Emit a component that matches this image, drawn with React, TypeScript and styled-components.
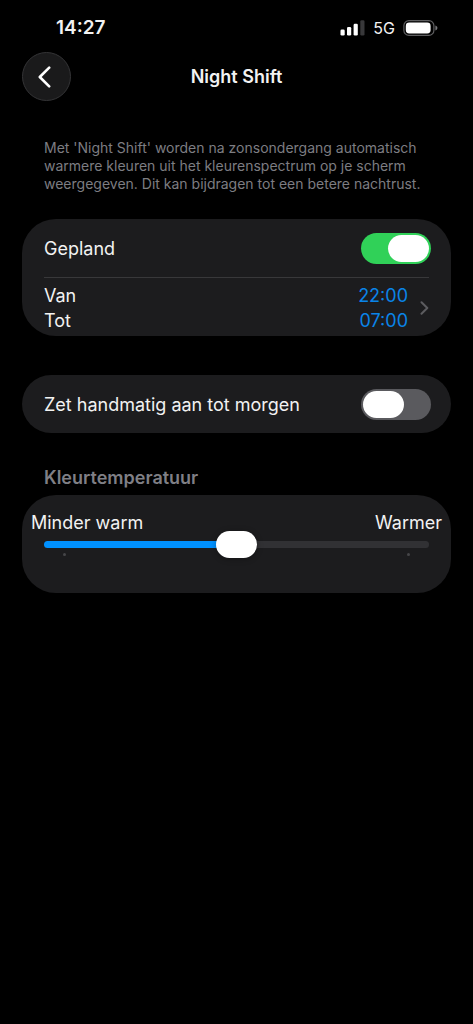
import React, { useState } from "react";
import styled, { createGlobalStyle } from "styled-components";

const GlobalStyle = createGlobalStyle`
  *, *::before, *::after {
    box-sizing: border-box;
  }
  body {
    margin: 0;
    background: #000;
    color: #f2f2f2;
    font-family: Inter, "Liberation Sans", sans-serif;
    font-size: 18px;
    line-height: 24px;
  }
`;

const Screen = styled.div`
  min-height: 100vh;
  background: #000;
`;

const StatusBar = styled.div`
  display: flex;
  justify-content: space-between;
  align-items: center;
  height: 52px;
  padding: 4px 35px 0 56px;
`;

const Clock = styled.time`
  font-size: 19px;
  font-weight: 600;
`;

const StatusIcons = styled.div`
  display: flex;
  align-items: center;
  gap: 8px;
`;

const Network = styled.span`
  font-size: 16px;
  font-weight: 400;
`;

const NavBar = styled.header`
  display: grid;
  grid-template-columns: 49px 1fr 49px;
  align-items: center;
  padding: 0 22px;
`;

const BackButton = styled.button`
  display: flex;
  align-items: center;
  justify-content: center;
  width: 49px;
  height: 49px;
  padding: 0 4px 0 0;
  border: 1px solid #343436;
  border-radius: 50%;
  background: #1a1a1b;
  color: #fff;
`;

const Title = styled.h1`
  margin: 0;
  font-size: 18px;
  font-weight: 600;
  text-align: center;
`;

const Content = styled.main`
  padding: 38px 22px;
`;

const Intro = styled.p`
  margin: 0 22px 26px;
  color: #7d7d82;
  font-size: 14px;
  line-height: 18px;
`;

const Card = styled.section`
  border-radius: 34px;
  background: #1c1c1e;
`;

const ToggleRow = styled.label`
  display: flex;
  align-items: center;
  justify-content: space-between;
  height: 58px;
  padding: 0 20px 0 22px;
`;

const RowLabel = styled.span`
  padding-top: 2px;
`;

const Switch = styled.input`
  appearance: none;
  flex: none;
  width: 70px;
  height: 31px;
  margin: 0;
  padding: 2px;
  border-radius: 16px;
  background: #5a5a5e;

  &::before {
    content: "";
    display: block;
    width: 41px;
    height: 27px;
    border-radius: 14px;
    background: #fff;
  }

  &:checked {
    background: #30d158;
  }

  &:checked::before {
    margin-left: auto;
  }
`;

const Divider = styled.hr`
  height: 1px;
  margin: 0 22px;
  border: 0;
  background: #38383a;
`;

const ScheduleButton = styled.button`
  display: flex;
  align-items: center;
  width: 100%;
  padding: 5px 22px 3px;
  border: 0;
  background: none;
  color: inherit;
  font: inherit;
  text-align: left;
`;

const ScheduleLines = styled.span`
  flex: 1;
  margin-right: 12px;
`;

const ScheduleLine = styled.span`
  display: flex;
  justify-content: space-between;
  line-height: 25px;
`;

const Time = styled.span`
  color: #0a84e8;
`;

const ManualCard = styled(Card)`
  margin-top: 39px;
`;

const SectionTitle = styled.h2`
  margin: 33px 22px 5px;
  color: #7f7f85;
  font-size: 18px;
  font-weight: 600;
  line-height: 24px;
`;

const SliderCard = styled(Card)`
  padding: 16px 0 37px;
`;

const SliderLabels = styled.div`
  display: flex;
  justify-content: space-between;
  padding: 0 9px;
`;

const SliderArea = styled.div`
  margin: -4px 22px 0;
`;

const Slider = styled.input<{ $fill: number }>`
  appearance: none;
  display: block;
  width: 100%;
  height: 27px;
  margin: 0;
  background: none;

  &::-webkit-slider-runnable-track {
    height: 7px;
    border-radius: 4px;
    background: linear-gradient(
      to right,
      #0091ff ${(p) => p.$fill}%,
      #313134 ${(p) => p.$fill}%
    );
  }

  &::-webkit-slider-thumb {
    appearance: none;
    width: 41px;
    height: 27px;
    margin-top: -10px;
    border-radius: 14px;
    background: #fff;
    box-shadow: 0 1px 6px rgba(0, 0, 0, 0.3);
  }
`;

const Ticks = styled.div`
  display: flex;
  justify-content: space-between;
  margin-top: -5px;
  padding: 0 19px;
`;

const Tick = styled.span`
  width: 3px;
  height: 3px;
  border-radius: 50%;
  background: #464649;
`;

function SignalIcon() {
  return (
    <svg width="25" height="16" viewBox="0 0 25 16" aria-hidden="true">
      <rect x="0.5" y="9.5" width="4.2" height="6" rx="1.3" fill="#fff" />
      <rect x="7" y="7" width="4.2" height="8.5" rx="1.3" fill="#fff" />
      <rect x="13.6" y="3.8" width="4.2" height="11.7" rx="1.3" fill="#fff" />
      <rect x="20.3" y="0.3" width="4.2" height="15.2" rx="1.3" fill="#38383a" />
    </svg>
  );
}

function BatteryIcon() {
  return (
    <svg width="35" height="16" viewBox="0 0 35 16" aria-hidden="true">
      <rect x="0.9" y="0.6" width="30" height="14.8" rx="5" fill="none" stroke="#5e5e60" strokeWidth="1.2" />
      <rect x="2.8" y="2.5" width="24.8" height="11" rx="3.4" fill="#fff" />
      <path d="M32.4 5.6c1.3.4 2 1.300 2 2.400s-.7 2-2 2.400z" fill="#77777a" />
    </svg>
  );
}

export default function App() {
  const [scheduled, setScheduled] = useState(true);
  const [manual, setManual] = useState(false);
  const [warmth, setWarmth] = useState(50);

  return (
    <Screen lang="nl">
      <GlobalStyle />
      <StatusBar>
        <Clock>14:27</Clock>
        <StatusIcons>
          <SignalIcon />
          <Network>5G</Network>
          <BatteryIcon />
        </StatusIcons>
      </StatusBar>
      <NavBar>
        <BackButton type="button" aria-label="Terug">
          <svg width="13" height="22" viewBox="0 0 13 22" fill="none" aria-hidden="true">
            <path d="M11.200 1.700L1.800 11l9.400 9.300" stroke="currentColor" strokeWidth="2.600" strokeLinecap="round" strokeLinejoin="round" />
          </svg>
        </BackButton>
        <Title>Night Shift</Title>
      </NavBar>
      <Content>
        <Intro>
          Met 'Night Shift' worden na zonsondergang automatisch warmere kleuren uit het
          kleurenspectrum op je scherm weergegeven. Dit kan bijdragen tot een betere nachtrust.
        </Intro>
        <Card>
          <ToggleRow>
            <RowLabel>Gepland</RowLabel>
            <Switch
              type="checkbox"
              role="switch"
              checked={scheduled}
              onChange={(e) => setScheduled(e.target.checked)}
            />
          </ToggleRow>
          <Divider />
          <ScheduleButton type="button">
            <ScheduleLines>
              <ScheduleLine>
                Van <Time>22:00</Time>
              </ScheduleLine>
              <ScheduleLine>
                Tot <Time>07:00</Time>
              </ScheduleLine>
            </ScheduleLines>
            <svg width="9" height="14" viewBox="0 0 9 14" fill="none" aria-hidden="true">
              <path d="M1.500 1.200L7.300 7l-5.800 5.800" stroke="#5c5c60" strokeWidth="2" strokeLinecap="round" strokeLinejoin="round" />
            </svg>
          </ScheduleButton>
        </Card>
        <ManualCard>
          <ToggleRow>
            <RowLabel>Zet handmatig aan tot morgen</RowLabel>
            <Switch
              type="checkbox"
              role="switch"
              checked={manual}
              onChange={(e) => setManual(e.target.checked)}
            />
          </ToggleRow>
        </ManualCard>
        <SectionTitle id="warmth-title">Kleurtemperatuur</SectionTitle>
        <SliderCard>
          <SliderLabels>
            <span>Minder warm</span>
            <span>Warmer</span>
          </SliderLabels>
          <SliderArea>
            <Slider
              type="range"
              min={0}
              max={100}
              value={warmth}
              $fill={warmth}
              aria-labelledby="warmth-title"
              onChange={(e) => setWarmth(Number(e.target.value))}
            />
            <Ticks>
              <Tick />
              <Tick />
            </Ticks>
          </SliderArea>
        </SliderCard>
      </Content>
    </Screen>
  );
}
